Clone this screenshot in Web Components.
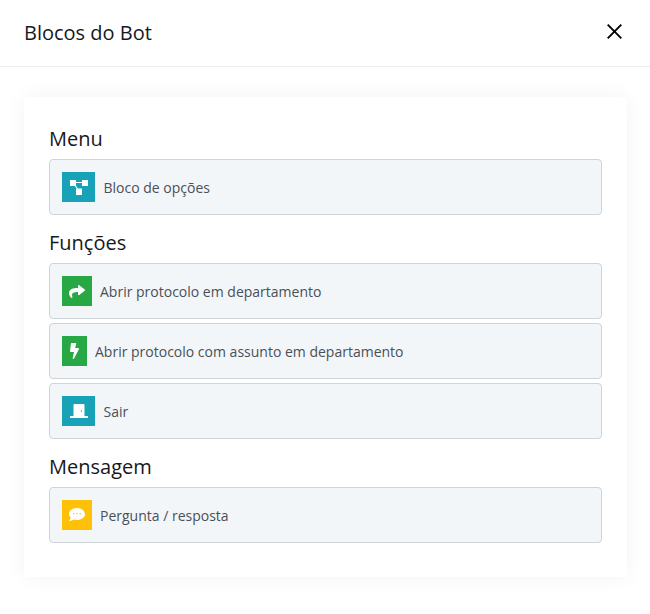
<!DOCTYPE html>
<html lang="pt"><head><meta charset="utf-8"><title>Blocos do Bot</title>
<style>html,body{margin:0;padding:0;background:#fff}body{font-family:"Open Sans",sans-serif;width:650px;height:614px;overflow:hidden}</style>
</head><body>
<bot-modal heading="Blocos do Bot">
  <block-group heading="Menu">
    <block-item label="Bloco de opções" color="#17a2b8" width="33" gap="8.5" icon="tree"></block-item>
  </block-group>
  <block-group heading="Funções">
    <block-item label="Abrir protocolo em departamento" color="#28a745" width="30" icon="share"></block-item>
    <block-item label="Abrir protocolo com assunto em departamento" color="#28a745" width="25" icon="bolt"></block-item>
    <block-item label="Sair" color="#17a2b8" width="33" gap="8.5" icon="door"></block-item>
  </block-group>
  <block-group heading="Mensagem">
    <block-item label="Pergunta / resposta" color="#ffc107" width="30" icon="chat"></block-item>
  </block-group>
</bot-modal>
<script>
const ICONS={
tree:'<svg width="18" height="15" viewBox="0 0 18 15"><path d="M3 2.500H15M3 2.500L9 11" stroke="#fff" stroke-width="1.200" fill="none"/><rect x="0" y="0" width="6" height="6" fill="#fff"/><rect x="12" y="0" width="6" height="6" fill="#fff"/><rect x="6" y="8.500" width="6" height="6.500" fill="#fff"/></svg>',
share:'<svg width="16" height="13" viewBox="0 32 512 448" preserveAspectRatio="none"><path fill="#fff" d="M503.691 189.836L327.687 37.851C312.281 24.546 288 35.347 288 56.015v80.053C127.371 137.907 0 170.100 0 322.326c0 61.441 39.581 122.309 83.333 154.132 13.653 9.931 33.111-2.533 28.077-18.631C66.066 312.814 132.917 274.316 288 272.085V360c0 20.700 24.300 31.453 39.687 18.164l176.004-152c11.071-9.562 11.086-26.753 0-36.328z"/></svg>',
bolt:'<svg width="9" height="16" viewBox="0 0 320 512" preserveAspectRatio="none"><path fill="#fff" d="M296 160H180.600l42.600-129.800C227.200 15 215.700 0 200 0H56C44 0 33.800 8.900 32.200 20.800l-32 240C-1.600 275.200 9.500 288 24 288h118.700L96.600 482.500c-3.600 15.200 8 29.500 23.300 29.500 8.400 0 16.400-4.400 20.800-12l176-304c9.300-15.900-2.200-36-20.700-36z"/></svg>',
door:'<svg width="18" height="14" viewBox="0 0 18 14"><path fill="#fff" fill-rule="evenodd" d="M3.500 1.200C3.500.5 4 0 4.700 0H13.300C14 0 14.500.5 14.500 1.200V12.500H3.500zM10.700 7a.7.7 0 1 0 1.400 0a.7.7 0 1 0-1.400 0z"/><rect x="0" y="12" width="18" height="2" fill="#fff"/></svg>',
chat:'<svg width="16" height="14" viewBox="0 0 16 14"><path fill="#fff" fill-rule="evenodd" d="M8 0C3.600 0 0 2.600 0 5.800c0 1.400.7 2.700 1.800 3.700-.3 1.300-1.100 2.400-1.600 3-.2.200 0 .5.200.5 1.900 0 3.400-.8 4.300-1.500 1 .3 2.100.5 3.300.5 4.400 0 8-2.600 8-5.800S12.400 0 8 0zM4 5.800a.8.8 0 1 0 1.600 0a.8.8 0 1 0-1.600 0zM7.200 5.800a.8.8 0 1 0 1.600 0a.8.8 0 1 0-1.600 0zM10.400 5.800a.8.8 0 1 0 1.600 0a.8.8 0 1 0-1.600 0z"/></svg>'
};
customElements.define('bot-modal',class extends HTMLElement{
 constructor(){super();this.attachShadow({mode:'open'}).innerHTML=`<style>
 :host{display:block;font-family:"Open Sans",sans-serif}
 header{height:66px;border-bottom:1px solid #eeeeee;display:flex;align-items:center;justify-content:space-between;padding:0 27px 0 24px}
 h1{margin:0;font-size:20px;font-weight:400;color:#16191c;line-height:30px}
 button{all:unset;display:flex;width:16px;height:16px;margin-bottom:2px}
 main{padding:30px 23px 0 24px}
 .card{background:#fff;box-shadow:0 0 20px rgba(0,0,0,.05);padding:25px 25px 34px}
 </style><header><h1></h1><button aria-label="Fechar"><svg width="16" height="16" viewBox="0 0 16 16"><path d="M.7 .7L14.300 14.300M14.300 .7L.7 14.300" stroke="#000" stroke-width="1.900" fill="none"/></svg></button></header><main><div class="card"><slot></slot></div></main>`;}
 connectedCallback(){this.shadowRoot.querySelector('h1').textContent=this.getAttribute('heading');}
});
customElements.define('block-group',class extends HTMLElement{
 constructor(){super();this.attachShadow({mode:'open'}).innerHTML=`<style>
 :host{display:block;margin-bottom:11px}
 :host(:last-child){margin-bottom:0}
 h2{margin:0 0 4px;font-size:20px;font-weight:400;line-height:33px;color:#16191c}
 .list{display:flex;flex-direction:column;gap:4px}
 </style><h2></h2><div class="list"><slot></slot></div>`;}
 connectedCallback(){this.shadowRoot.querySelector('h2').textContent=this.getAttribute('heading');}
});
customElements.define('block-item',class extends HTMLElement{
 constructor(){super();this.attachShadow({mode:'open'}).innerHTML=`<style>
 :host{display:flex;align-items:center;height:56px;box-sizing:border-box;border:1px solid #ced4da;border-radius:4px;background:#f3f6f9;padding:0 12px;gap:8px;font-size:14px;color:#495057}
 .i{height:30px;display:flex;align-items:center;justify-content:center;flex:none}
 </style><span class="i"></span><span class="t"></span>`;}
 connectedCallback(){const i=this.shadowRoot.querySelector('.i');i.style.background=this.getAttribute('color');i.style.width=this.getAttribute('width')+'px';if(this.hasAttribute('gap'))this.style.gap=this.getAttribute('gap')+'px';i.innerHTML=ICONS[this.getAttribute('icon')];this.shadowRoot.querySelector('.t').textContent=this.getAttribute('label');}
});
</script>
</body></html>
